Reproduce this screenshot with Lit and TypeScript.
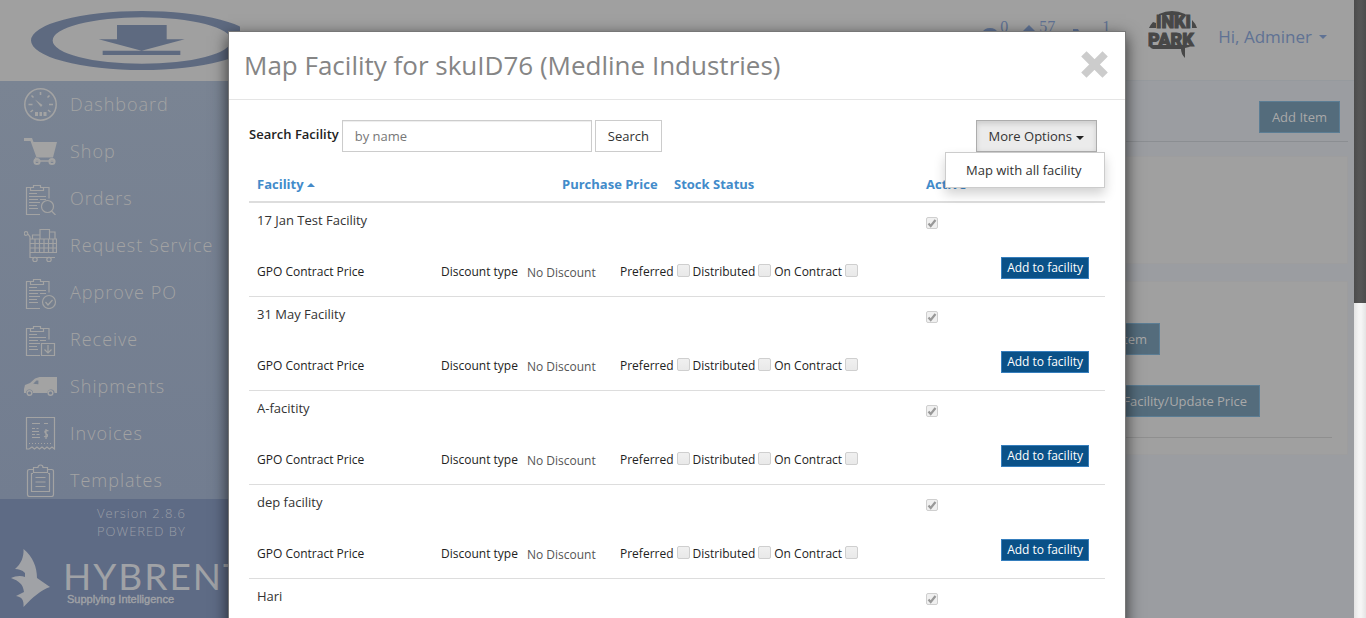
import { LitElement, html, svg, css, nothing } from "lit";
import { customElement, state } from "lit/decorators.js";

const clipboard = svg`
  <path d="M22 5.500h3v11M6.500 5.500H2.500v27H16M6.500 5.500v3h13v-3h-3v-2h-7v2zM22 5.500h-3"/>
  <path d="M5 11.500h8M5 14.500h17M5 17.500h9M16 17.500h6M5 20.500h11M5 23.500h8M5 26.500h9"/>`;

const icons: Record<string, unknown> = {
  dashboard: svg`
    <circle cx="16.500" cy="16.500" r="15.700" stroke-width="1.500"/>
    <path d="M16.500 4v3M25.500 7.500l-2 2M29 16.500h-4M26.500 24l-2.500-2M7.500 7.500l2 2M4.500 16.500h4M6.500 24l2.500-2" stroke-width="1.600"/>
    <path d="M11 11.500l7.500 5.500-1.500 2z" class="solid"/>
    <path d="M11 24h3v4h-3zM15.500 24h2.500v4h-2.500zM19.500 24h3v4h-3z" class="solid"/>`,
  shop: svg`
    <path d="M0 3h8l1.500 4H33l-4 15.500H12.500L6.500 6H0z" class="solid"/>
    <path d="M12 22.500l-1 3.500h19" stroke-width="1.600"/>
    <circle cx="13" cy="26.500" r="2.600" stroke-width="2"/><circle cx="28" cy="26.500" r="2.600" stroke-width="2"/>`,
  orders: svg`${clipboard}
    <circle cx="23.500" cy="24.500" r="6" class="hole"/><path d="M27.500 29l4 4"/>`,
  request: svg`
    <circle cx="2" cy="4.500" r="1.800"/><path d="M4 5l2 3v20.500h25M6 10h26.500v13.500H6zM11 10v13.500M15.500 10v13.500M20 10v13.500M24.500 10v13.500M29 10v13.500M6 14.500h26.500M6 19h26.500M8.500 10V6H16v4M16 6V.500h9.500V10M25.500 3H31v7"/>
    <circle cx="11" cy="30.500" r="2.200"/><circle cx="25" cy="30.500" r="2.200"/>`,
  approve: svg`${clipboard}
    <circle cx="25" cy="26" r="6.500" class="hole"/><path d="M21.500 26l2.500 3 4.500-5"/>`,
  receive: svg`${clipboard}
    <path d="M17.500 20.500h13v12h-13z" class="hole"/><path d="M24 22v8M20.500 26.500L24 30l3.500-3.500"/>`,
  shipments: svg`
    <path d="M15.500 7H33v16h-2.500a3.500 3.500 0 0 0-7 0H9a3.500 3.500 0 0 0-7 0H0v-4l1-4 5-2 5-4.500z" class="solid"/>
    <path d="M8 14l4-4h3v5z" class="hole"/>
    <circle cx="5.500" cy="23" r="2.300" stroke-width="1.500"/><circle cx="26.500" cy="23" r="2.300" stroke-width="1.500"/>`,
  invoices: svg`
    <path d="M2.500 32V.500h28V32l-2.500-2-2.500 2-2.500-2-2.500 2-2.500-2-2.500 2-2.500-2-2.500 2-2.500-2-3 2z"/>
    <path d="M8 6.500h8M20 6.500h4M8 11.500h3M12.500 11.500h2M8 14.500h7M8 17.500h3M12.500 17.500h3M8 20.500h8"/>
    <path d="M5 26.500h24" stroke-dasharray="1 2"/>
    <path d="M24.500 14c-3-2-5 1-2.500 2.500s2 4.500-2 3M22 12v10"/>`,
  templates: svg`
    <path d="M10 5.500H5.500q-2 0-2 2v23q0 2 2 2h22q2 0 2-2v-23q0-2-2-2H23M9.500 8.500v-5h4.500a2.500 2.500 0 0 1 5 0h4.500v5z"/>
    <path d="M9 9.500H7.500v18h18v-18H24M11.500 13.500h10M11.500 18h10M11.500 22.500h10"/>`,
};

const menu = [
  ["dashboard", "Dashboard"],
  ["shop", "Shop"],
  ["orders", "Orders"],
  ["request", "Request Service"],
  ["approve", "Approve PO"],
  ["receive", "Receive"],
  ["shipments", "Shipments"],
  ["invoices", "Invoices"],
  ["templates", "Templates"],
];

const base = css`
  * { box-sizing: border-box; }
  button, input { font: inherit; margin: 0; }
  a { color: inherit; text-decoration: none; }
`;

@customElement("side-nav")
class SideNav extends LitElement {
  static styles = [base, css`
    :host { display: flex; flex-direction: column; min-height: 0; color: #a3a3a3; }
    .brand { height: 81px; padding: 11px 0 0 31px; background: #a0a0a0; flex: none; }
    .brand svg { display: block; }
    .menu { flex: 1; min-height: 0; overflow: hidden; background: linear-gradient(#7a8493, #727d90); }
    .menu ul { list-style: none; margin: 0; padding: 0; }
    .item { display: flex; align-items: center; gap: 13px; height: 47px; padding-left: 24px;
      font-size: 18px; font-weight: 300; letter-spacing: 1px; white-space: nowrap; }
    .item span { padding-bottom: 2px; }
    .item svg { width: 33px; height: 33px; fill: none; stroke: currentColor; stroke-width: 1.2; flex: none; }
    .item .solid { fill: currentColor; stroke: none; }
    .item .hole { fill: #76808f; }
    .foot { flex: none; height: 119px; padding-top: 5px; background: #5e6b85; }
    .foot p { margin: 0; padding-left: 97px; font-size: 13px; font-weight: 300; line-height: 18px; letter-spacing: 1px; color: #999da6; }
    .foot svg { display: block; margin: 9px 0 0 11px; }
    .wordmark { font: 400 37px Lato, sans-serif; letter-spacing: 2px; }
    .motto { font: 11px "Liberation Sans", sans-serif; stroke: #a0a2a6; stroke-width: .4; }
  `];
  render() {
    return html`
      <div class="brand">
        <svg width="222" height="59" viewBox="93 33 666 177" fill="#5e6a80" role="img" aria-label="Logo">
          <path fill-rule="evenodd" d="M93 121.500a333 88.500 0 1 0 666 0a333 88.500 0 1 0-666 0zM158 121.500a268 70 0 1 0 536 0a268 70 0 1 0-536 0z"/>
          <path d="M351 75h149v43h54l-129 34-129-34h55zM308 152h233v13H308z"/>
        </svg>
      </div>
      <nav class="menu"><ul>
        ${menu.map(([icon, label]) => html`<li><a class="item" href="#${icon}">
          <svg viewBox="0 0 33 33" aria-hidden="true">${icons[icon]}</svg><span>${label}</span></a></li>`)}
      </ul></nav>
      <div class="foot">
        <p>Version 2.8.6</p>
        <p>POWERED BY</p>
        <svg width="229" height="60" viewBox="0 0 229 60" fill="#a0a2a6">
          <path d="M12.500 0C22 8 26 18 26 29L39 38C30 41 22 48 12.500 58C13 51 11 48 5 47L13 43C12 35 8 32 0 29C4 27 10 26 14 28L14 24C11 21 8 20 4 20C10 15 13 8 12.500 0z"/>
          <text class="wordmark" x="52" y="41">HYBRENT</text>
          <text class="motto" x="56" y="54">Supplying Intelligence</text>
        </svg>
      </div>`;
  }
}

@customElement("page-main")
class PageMain extends LitElement {
  static styles = [base, css`
    :host { display: flex; flex-direction: column; background: #9b9da1; font-size: 13px; line-height: 18px; }
    .top { display: flex; justify-content: flex-end; align-items: flex-start; height: 81px; flex: none;
      background: #a0a0a0; border-bottom: 1px solid #969a9e; color: #5f7294; }
    .stats { display: flex; gap: 14px; margin: 18px 38px 0 0; }
    .stat { display: flex; gap: 3px; font: 16px/18px "Liberation Serif", serif; }
    .stat svg { margin-top: 7px; fill: currentColor; }
    .club { margin: 11px 21px 0 0; fill: #474747; }
    .club text { font: 900 18px Roboto, sans-serif; stroke: #474747; stroke-width: 1; }
    .user { display: flex; align-items: center; gap: 7px; margin: 25px 27px 0 0; font-size: 17px; line-height: 24px; }
    .caret { border: 4px solid transparent; border-top-color: currentColor; border-bottom: 0; }
    .bar { display: flex; justify-content: flex-end; margin: 0 6px 0 10px; padding: 20px 8px 8px;
      border-bottom: 1px solid #8b8e92; }
    .btn { height: 32px; padding: 0 12px; border: 1px solid #5b7d94; border-radius: 0;
      background: #546c7c; color: #a9a9a9; font-weight: 500; white-space: nowrap; }
    .panel { background: #a0a0a0; margin: 14px 6px 0 10px; height: 108px; flex: none; border: 1px solid #9d9d9e; }
    .panel.tall { height: 174px; margin-top: 17px; padding: 41px 15px 0; }
    .row { display: flex; justify-content: flex-end; margin-bottom: 30px; padding-right: 172px; }
    .row.wide { padding-right: 72px; margin-bottom: 20px; }
    .line { border-top: 1px solid #8f8f8f; }
  `];
  render() {
    return html`
      <header class="top">
        <div class="stats">
          <span class="stat"><svg width="14" height="14"><ellipse cx="7" cy="7" rx="7" ry="4"/></svg>0</span>
          <span class="stat"><svg width="14" height="14"><path d="M7 0l7 7-7 7-7-7z"/></svg>57</span>
          <span class="stat"><svg width="30" height="14"><path d="M4 4h5l1 2h16l-3 7H11L8 6H4z"/></svg>1</span>
        </div>
        <svg class="club" width="49" height="48" viewBox="0 0 49 48" role="img" aria-label="Club logo">
          <path d="M1 17q2-4 4-6l3 1v5zM11 3q13-6 26 0v1H11zM44 9q4 4 5 8h-5zM1 34h43q-3 3-7 3v10q-4-4-4-9H5q-3-1-4-4z"/>
          <text x="8" y="17">INKI</text>
          <text x="0" y="35">PARK</text>
        </svg>
        <a class="user" href="#account">Hi, Adminer <span class="caret"></span></a>
      </header>
      <div class="bar"><button class="btn">Add Item</button></div>
      <section class="panel"></section>
      <section class="panel tall">
        <div class="row"><button class="btn">Update Item</button></div>
        <div class="row wide"><button class="btn">Map Facility/Update Price</button></div>
        <div class="line"></div>
      </section>`;
  }
}

@customElement("facility-dialog")
class FacilityDialog extends LitElement {
  @state() open = true;
  facilities = ["17 Jan Test Facility", "31 May Facility", "A-facitity", "dep facility", "Hari"];
  static styles = [base, css`
    :host { display: block; background: #fff; border: 1px solid #777; box-shadow: 0 5px 15px rgba(0, 0, 0, .7);
      font-size: 13px; line-height: 18px; color: #333; }
    .head { display: flex; justify-content: space-between; align-items: center; height: 68px;
      padding: 0 17px 2px 15px; border-bottom: 1px solid #e5e5e5; }
    h1 { margin: 0; font-size: 26px; line-height: 36px; font-weight: 400; color: #858585; }
    .close { padding: 0; border: 0; background: none; display: flex; }
    .body { padding: 20px 20px 0; }
    .tools { display: flex; align-items: center; gap: 3px; }
    .tools label { font-weight: 600; padding-bottom: 4px; color: #222; }
    .field { width: 250px; height: 32px; padding: 0 12px; border: 1px solid #ccc; border-radius: 0;
      box-shadow: inset 0 1px 1px rgba(0, 0, 0, .075); color: #555; }
    .field::placeholder { color: #777; opacity: 1; }
    .btn { height: 32px; padding: 0 12px; border: 1px solid #ccc; border-radius: 0; background: #fff; color: #333; }
    .more { position: relative; margin: 0 8px 0 auto; }
    .btn.on { display: flex; align-items: center; gap: 4px; background: #ebebeb; border-color: #adadad;
      box-shadow: inset 0 3px 5px rgba(0, 0, 0, .125); }
    .down { border: 4px solid transparent; border-top-color: #222; border-bottom: 0; margin-top: 3px; }
    .up { display: inline-block; border: 4px solid transparent; border-bottom-color: currentColor; border-top: 0;
      margin-left: 3px; vertical-align: 2px; }
    .drop { position: absolute; right: -8px; top: 100%; width: 160px; padding: 8px 0 8px 20px; z-index: 1;
      background: #fff; border: 1px solid #ccc; box-shadow: 0 6px 12px rgba(0, 0, 0, .18); }
    .drop a { display: block; }
    table { width: 100%; margin-top: 15px; table-layout: fixed; border-collapse: collapse; }
    .c1 { width: 305px; } .c2 { width: 112px; } .c3 { width: 252px; }
    th { text-align: left; color: #428bca; font-weight: 700; padding: 8px; border-bottom: 2px solid #ddd; white-space: nowrap; }
    td { padding: 8px; vertical-align: top; height: 46px; }
    td.detail { height: 48px; padding: 8px 16px 0 8px; border-bottom: 1px solid #ddd; }
    .check { display: block; appearance: none; width: 13px; height: 13px; flex: none; border: 1px solid #cfcfcf;
      border-radius: 2px; background: linear-gradient(#f0f0f0, #e9e9e9); }
    .active { margin: 6px 0 0; width: 12px; height: 12px; }
    .check:checked { background: #f0f0f0 url("data:image/svg+xml,%3Csvg xmlns='http://www.w3.org/2000/svg' viewBox='0 0 10 10'%3E%3Cpath d='M1.500 5.500l2.200 2.500L8.500 2' fill='none' stroke='%23999' stroke-width='2.200'/%3E%3C/svg%3E") center / 10px no-repeat; }
    .line { display: grid; grid-template-columns: 184px 179px 1fr auto; align-items: start; padding-top: 1px; font-size: 12px; }
    .line > * { margin-top: 6px; }
    .line b, .line label { font-weight: 500; color: #222; }
    .type { display: flex; gap: 9px; }
    .type span { padding-top: 1px; color: #555; }
    .flags { display: flex; gap: 3px; }
    .flags label { display: flex; gap: 3px; }
    .line .add { margin: 0; height: 22px; padding: 0 5px; border: 1px solid #357ebd; background: #0a5188; color: #fff; font-weight: 500; line-height: 18px; }
    .flags .check { margin-top: 1px; }
  `];
  render() {
    return html`
      <div class="head">
        <h1>Map Facility for skuID76 (Medline Industries)</h1>
        <button class="close" aria-label="Close">
          <svg width="27" height="27" viewBox="0 0 27 27"><path d="M5.500 5.500l16 16M21.500 5.500l-16 16" stroke="#ccc" stroke-width="7.500" stroke-linecap="square"/></svg>
        </button>
      </div>
      <div class="body">
        <div class="tools">
          <label for="q">Search Facility</label>
          <input id="q" class="field" type="text" placeholder="by name">
          <button class="btn">Search</button>
          <div class="more">
            <button class="btn on" aria-expanded=${this.open} @click=${() => (this.open = !this.open)}>More Options <span class="down"></span></button>
            ${this.open ? html`<div class="drop"><a href="#all">Map with all facility</a></div>` : nothing}
          </div>
        </div>
        <table>
          <colgroup><col class="c1"><col class="c2"><col class="c3"><col></colgroup>
          <thead><tr>
            <th><a href="#facility">Facility<span class="up"></span></a></th>
            <th>Purchase Price</th><th>Stock Status</th><th>Active</th>
          </tr></thead>
          <tbody>
            ${this.facilities.map((name) => html`
              <tr><td>${name}</td><td></td><td></td>
                <td><input class="check active" type="checkbox" checked disabled aria-label="Active"></td></tr>
              <tr><td class="detail" colspan="4"><div class="line">
                <b>GPO Contract Price</b>
                <div class="type"><b>Discount type</b><span>No Discount</span></div>
                <div class="flags">
                  ${["Preferred", "Distributed", "On Contract"].map((f) => html`
                    <label>${f}<input class="check" type="checkbox" disabled></label>`)}
                </div>
                <button class="add">Add to facility</button>
              </div></td></tr>`)}
          </tbody>
        </table>
      </div>`;
  }
}

@customElement("app-root")
class AppRoot extends LitElement {
  static styles = [base, css`
    :host { display: flex; position: relative; height: 100vh; overflow: hidden;
      font-family: "Open Sans", "Noto Sans", sans-serif; }
    side-nav { width: 240px; flex: none; }
    page-main { flex: 1; min-width: 0; }
    .scroll { width: 12px; flex: none; background: linear-gradient(90deg, #e4e4e4, #f5f5f5 40%, #f5f5f5 60%, #e4e4e4); }
    .thumb { height: 49%; background: linear-gradient(90deg, #4c4c4c, #555 40%, #555 60%, #4c4c4c); }
    .layer { position: absolute; inset: 0 12px 0 0; padding-top: 31px; }
    facility-dialog { max-width: 898px; margin: 0 auto; }
  `];
  render() {
    return html`
      <side-nav></side-nav>
      <page-main></page-main>
      <div class="scroll"><div class="thumb"></div></div>
      <div class="layer"><facility-dialog role="dialog" aria-label="Map Facility"></facility-dialog></div>`;
  }
}
